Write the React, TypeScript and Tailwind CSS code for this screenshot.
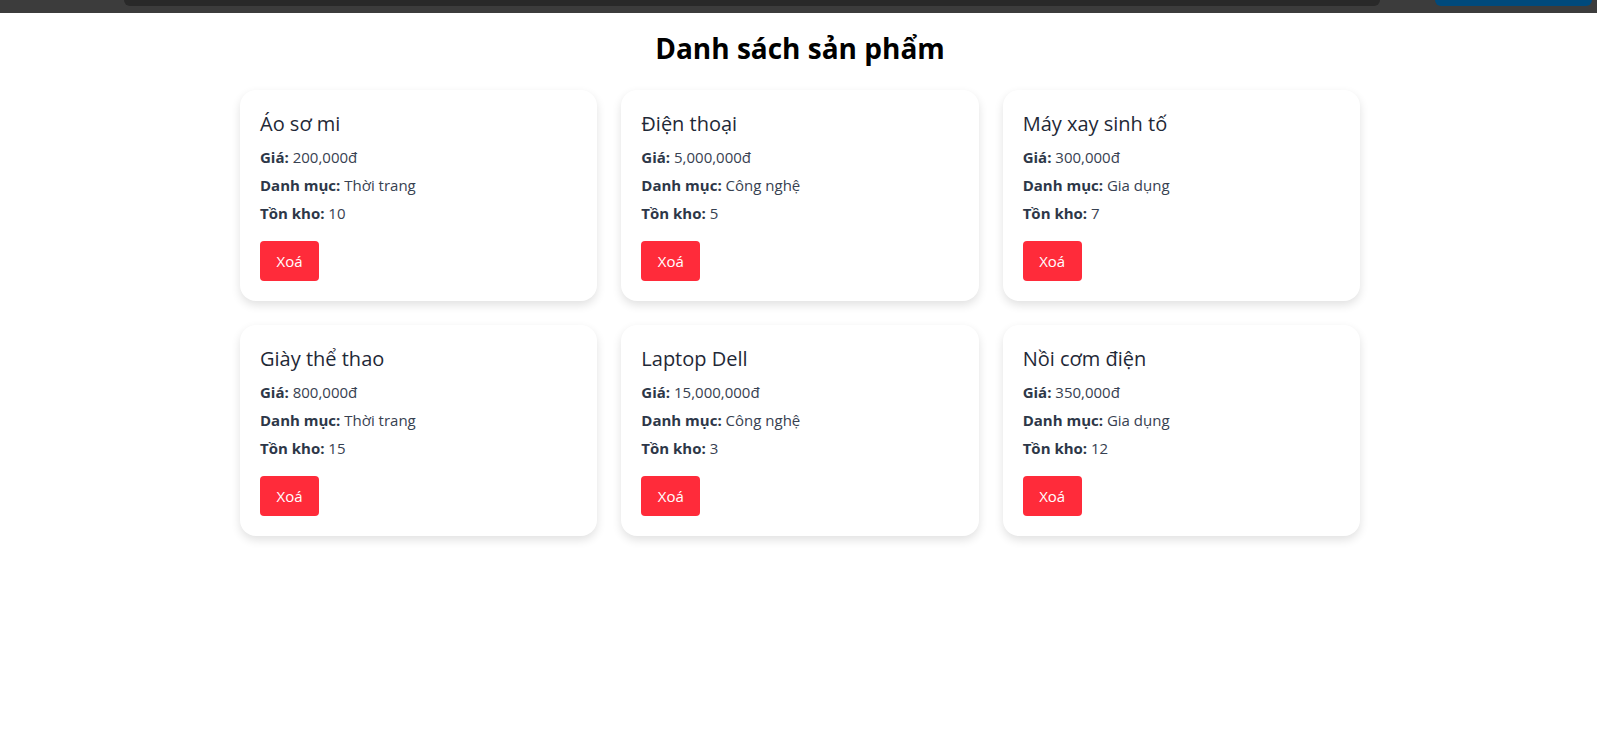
import React, { useState } from 'react';

interface Product {
    id: number;
    name: string;
    price: number;
    category: string;
    stock: number;
}

const initialProducts: Product[] = [
    { id: 1, name: 'Áo sơ mi', price: 200000, category: 'Thời trang', stock: 10 },
    { id: 2, name: 'Điện thoại', price: 5000000, category: 'Công nghệ', stock: 5 },
    { id: 3, name: 'Máy xay sinh tố', price: 300000, category: 'Gia dụng', stock: 7 },
    { id: 4, name: 'Giày thể thao', price: 800000, category: 'Thời trang', stock: 15 },
    { id: 5, name: 'Laptop Dell', price: 15000000, category: 'Công nghệ', stock: 3 },
    { id: 6, name: 'Nồi cơm điện', price: 350000, category: 'Gia dụng', stock: 12 },
];

const formatPrice = (n: number) => n.toLocaleString('en-US') + 'đ';

interface ProductCardProps {
    product: Product;
    onDelete: (id: number) => void;
}

const ProductCard: React.FC<ProductCardProps> = ({ product, onDelete }) => (
    <div className="flex flex-col rounded-2xl bg-white p-5 shadow-[0_4px_10px_rgba(0,0,0,0.12)]">
        <h3 className="mb-[5px] text-xl font-medium leading-7 text-[#1f2937]">{product.name}</h3>
        <p className="text-[15px] leading-7 text-[#374151]"><span className="font-bold text-[#2d3748]">Giá:</span> {formatPrice(product.price)}</p>
        <p className="text-[15px] leading-7 text-[#374151]"><span className="font-bold text-[#2d3748]">Danh mục:</span> {product.category}</p>
        <p className="text-[15px] leading-7 text-[#374151]"><span className="font-bold text-[#2d3748]">Tồn kho:</span> {product.stock}</p>
        <div className="mt-[14px]">
            <button
                onClick={() => onDelete(product.id)}
                className="h-10 w-[59px] rounded bg-[#ff2b3a] text-[15px] text-white"
            >
                Xoá
            </button>
        </div>
    </div>
);

const App: React.FC = () => {
    const [products, setProducts] = useState<Product[]>(initialProducts);

    const handleDelete = (id: number) => {
        setProducts(products.filter(p => p.id !== id));
    };

    return (
        <div className="min-h-screen bg-white font-['Open_Sans',sans-serif]">
            {/* strip of browser chrome at the top */}
            <div className="flex h-[13px] items-start bg-[#3c3c3c]">
                <div className="ml-[124px] h-[6px] w-[1256px] rounded-b-xl bg-[#292929]" />
                <div className="ml-[55px] h-[6px] w-[157px] rounded-b-xl bg-[#004a7c]" />
            </div>

            <h1 className="mt-[17px] pl-[3px] text-center text-[28px] font-bold leading-9 text-black">Danh sách sản phẩm</h1>

            <div className="ml-[240px] mt-[24px] grid w-[1120px] grid-cols-3 gap-6">
                {products.map(p => (
                    <ProductCard key={p.id} product={p} onDelete={handleDelete} />
                ))}
            </div>
        </div>
    );
};

export default App;
